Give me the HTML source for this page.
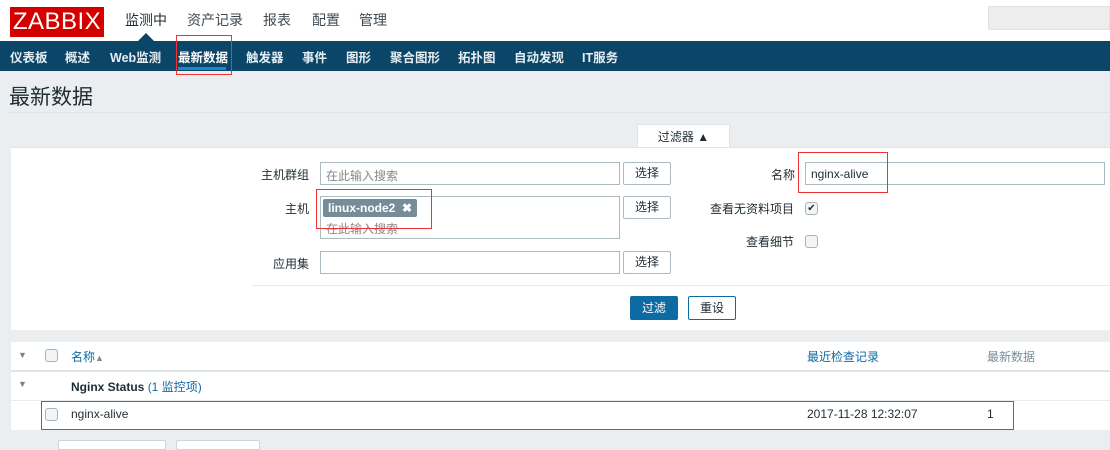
<!DOCTYPE html>
<html><head><meta charset="utf-8"><style>
*{margin:0;padding:0;box-sizing:border-box}
body{width:1110px;height:445px;overflow:hidden;background:#ebeef0;font-family:"Liberation Sans","Noto Sans CJK SC",sans-serif;font-size:12px;color:#1f2c33;position:relative}
.a{position:absolute;white-space:nowrap}
.inp{position:absolute;background:#fff;border:1px solid #acbbc2}
.btn{position:absolute;background:#fff;border:1px solid #acbbc2;border-radius:2px;text-align:center;font-size:12px;line-height:20px}
.cb{position:absolute;width:13px;height:13px;border:1px solid #a8b4bb;border-radius:3px;background:#f2f4f5}
.red{position:absolute;border:1px solid #e33}
.nv{position:absolute;top:47px;color:#e6edf1;font-size:12.5px;font-weight:bold;white-space:nowrap}
</style></head><body>
<div class="a" style="left:0;top:0;width:1110px;height:41px;background:#fff"></div>
<div class="a" style="left:10px;top:7px;width:94px;height:30px;background:#d40000;color:#fff;font-size:24px;line-height:30px;text-align:center;letter-spacing:0.5px">ZABBIX</div>
<div class="a" style="left:125px;top:10px;font-size:14px;color:#1f2c33">监测中</div>
<div class="a" style="left:187px;top:10px;font-size:14px;color:#3e4a52">资产记录</div>
<div class="a" style="left:263px;top:10px;font-size:14px;color:#3e4a52">报表</div>
<div class="a" style="left:312px;top:10px;font-size:14px;color:#3e4a52">配置</div>
<div class="a" style="left:359px;top:10px;font-size:14px;color:#3e4a52">管理</div>
<div class="a" style="left:138px;top:33px;width:0;height:0;border-left:8px solid transparent;border-right:8px solid transparent;border-bottom:8px solid #0b4669"></div>
<div class="a" style="left:988px;top:6px;width:122px;height:24px;background:#ededed;border:1px solid #e2e2e2"></div>
<div class="a" style="left:0;top:41px;width:1110px;height:30px;background:#0b4669"></div>
<div class="a" style="left:178px;top:67px;width:48px;height:3px;background:#1e87c8"></div>
<span class="nv" style="left:10px">仪表板</span><span class="nv" style="left:65px">概述</span><span class="nv" style="left:110px">Web监测</span><span class="nv" style="left:178px;color:#fff">最新数据</span><span class="nv" style="left:246px">触发器</span><span class="nv" style="left:302px">事件</span><span class="nv" style="left:346px">图形</span><span class="nv" style="left:390px">聚合图形</span><span class="nv" style="left:458px">拓扑图</span><span class="nv" style="left:514px">自动发现</span><span class="nv" style="left:582px">IT服务</span>
<div class="red" style="left:176px;top:35px;width:56px;height:40px"></div>
<div class="a" style="left:9px;top:81px;font-size:21px;color:#1f2c33">最新数据</div>
<div class="a" style="left:9px;top:112px;width:1101px;height:1px;background:#dde2e5"></div>
<div class="a" style="left:637px;top:124px;width:93px;height:24px;background:#fff;border:1px solid #dfe4e7;border-bottom:none;text-align:center;line-height:24px">过滤器 ▲</div>
<div class="a" style="left:11px;top:147px;width:1099px;height:183px;background:#fff;border-top:1px solid #dfe4e7"></div>
<div class="a" style="left:261px;top:166px">主机群组</div>
<div class="inp" style="left:320px;top:162px;width:300px;height:23px;color:#888;padding:4px 5px">在此输入搜索</div>
<div class="btn" style="left:623px;top:162px;width:48px;height:23px">选择</div>
<div class="a" style="left:285px;top:200px">主机</div>
<div class="inp" style="left:320px;top:196px;width:300px;height:43px;color:#888"><span class="a" style="left:2px;top:2px;background:#768d99;color:#fff;font-weight:bold;padding:2px 5px;border-radius:2px">linux-node2 &nbsp;✖</span><span class="a" style="left:5px;top:23px">在此输入搜索</span></div>
<div class="btn" style="left:623px;top:196px;width:48px;height:23px">选择</div>
<div class="red" style="left:316px;top:189px;width:116px;height:40px"></div>
<div class="a" style="left:273px;top:255px">应用集</div>
<div class="inp" style="left:320px;top:251px;width:300px;height:23px"></div>
<div class="btn" style="left:623px;top:251px;width:48px;height:23px">选择</div>
<div class="a" style="left:771px;top:166px">名称</div>
<div class="inp" style="left:805px;top:162px;width:300px;height:23px;padding:4px 5px">nginx-alive</div>
<div class="red" style="left:798px;top:152px;width:90px;height:41px"></div>
<div class="a" style="left:710px;top:200px">查看无资料项目</div>
<div class="cb" style="left:805px;top:202px;font-size:10px;line-height:11px;text-align:center">✔</div>
<div class="a" style="left:746px;top:233px">查看细节</div>
<div class="cb" style="left:805px;top:235px"></div>
<div class="a" style="left:252px;top:285px;width:858px;height:1px;background:#e8ebed"></div>
<div class="btn" style="left:630px;top:296px;width:48px;height:24px;background:#0d6aa3;border-color:#0d6aa3;color:#fff;line-height:22px">过滤</div>
<div class="btn" style="left:688px;top:296px;width:48px;height:24px;border-color:#0d6aa3;line-height:22px">重设</div>
<div class="a" style="left:11px;top:342px;width:1099px;height:88px;background:#fff"></div>
<div class="a" style="left:11px;top:370px;width:1099px;height:2px;background:#dfe4e7"></div>
<div class="a" style="left:11px;top:400px;width:1099px;height:1px;background:#e8ebed"></div>
<div class="a" style="left:18px;top:350px;color:#76848c;font-size:9px">▼</div>
<div class="cb" style="left:45px;top:349px"></div>
<div class="a" style="left:71px;top:348px;color:#0d6aa3">名称<span style="color:#768d99;font-size:9px">▲</span></div>
<div class="a" style="left:807px;top:348px;color:#0d6aa3">最近检查记录</div>
<div class="a" style="left:987px;top:348px;color:#768d99">最新数据</div>
<div class="a" style="left:18px;top:379px;color:#76848c;font-size:9px">▼</div>
<div class="a" style="left:71px;top:378px;font-weight:bold">Nginx Status <span style="font-weight:normal;color:#0d6aa3">(1 监控项)</span></div>
<div class="cb" style="left:45px;top:408px"></div>
<div class="a" style="left:71px;top:407px">nginx-alive</div>
<div class="a" style="left:807px;top:407px">2017-11-28 12:32:07</div>
<div class="a" style="left:987px;top:407px">1</div>
<div class="red" style="left:41px;top:401px;width:973px;height:29px;border-color:#f03030"></div>
<div class="a" style="left:58px;top:440px;width:108px;height:10px;background:#fff;border:1px solid #cfd6da;border-radius:2px"></div>
<div class="a" style="left:176px;top:440px;width:84px;height:10px;background:#fff;border:1px solid #cfd6da;border-radius:2px"></div>
</body></html>
